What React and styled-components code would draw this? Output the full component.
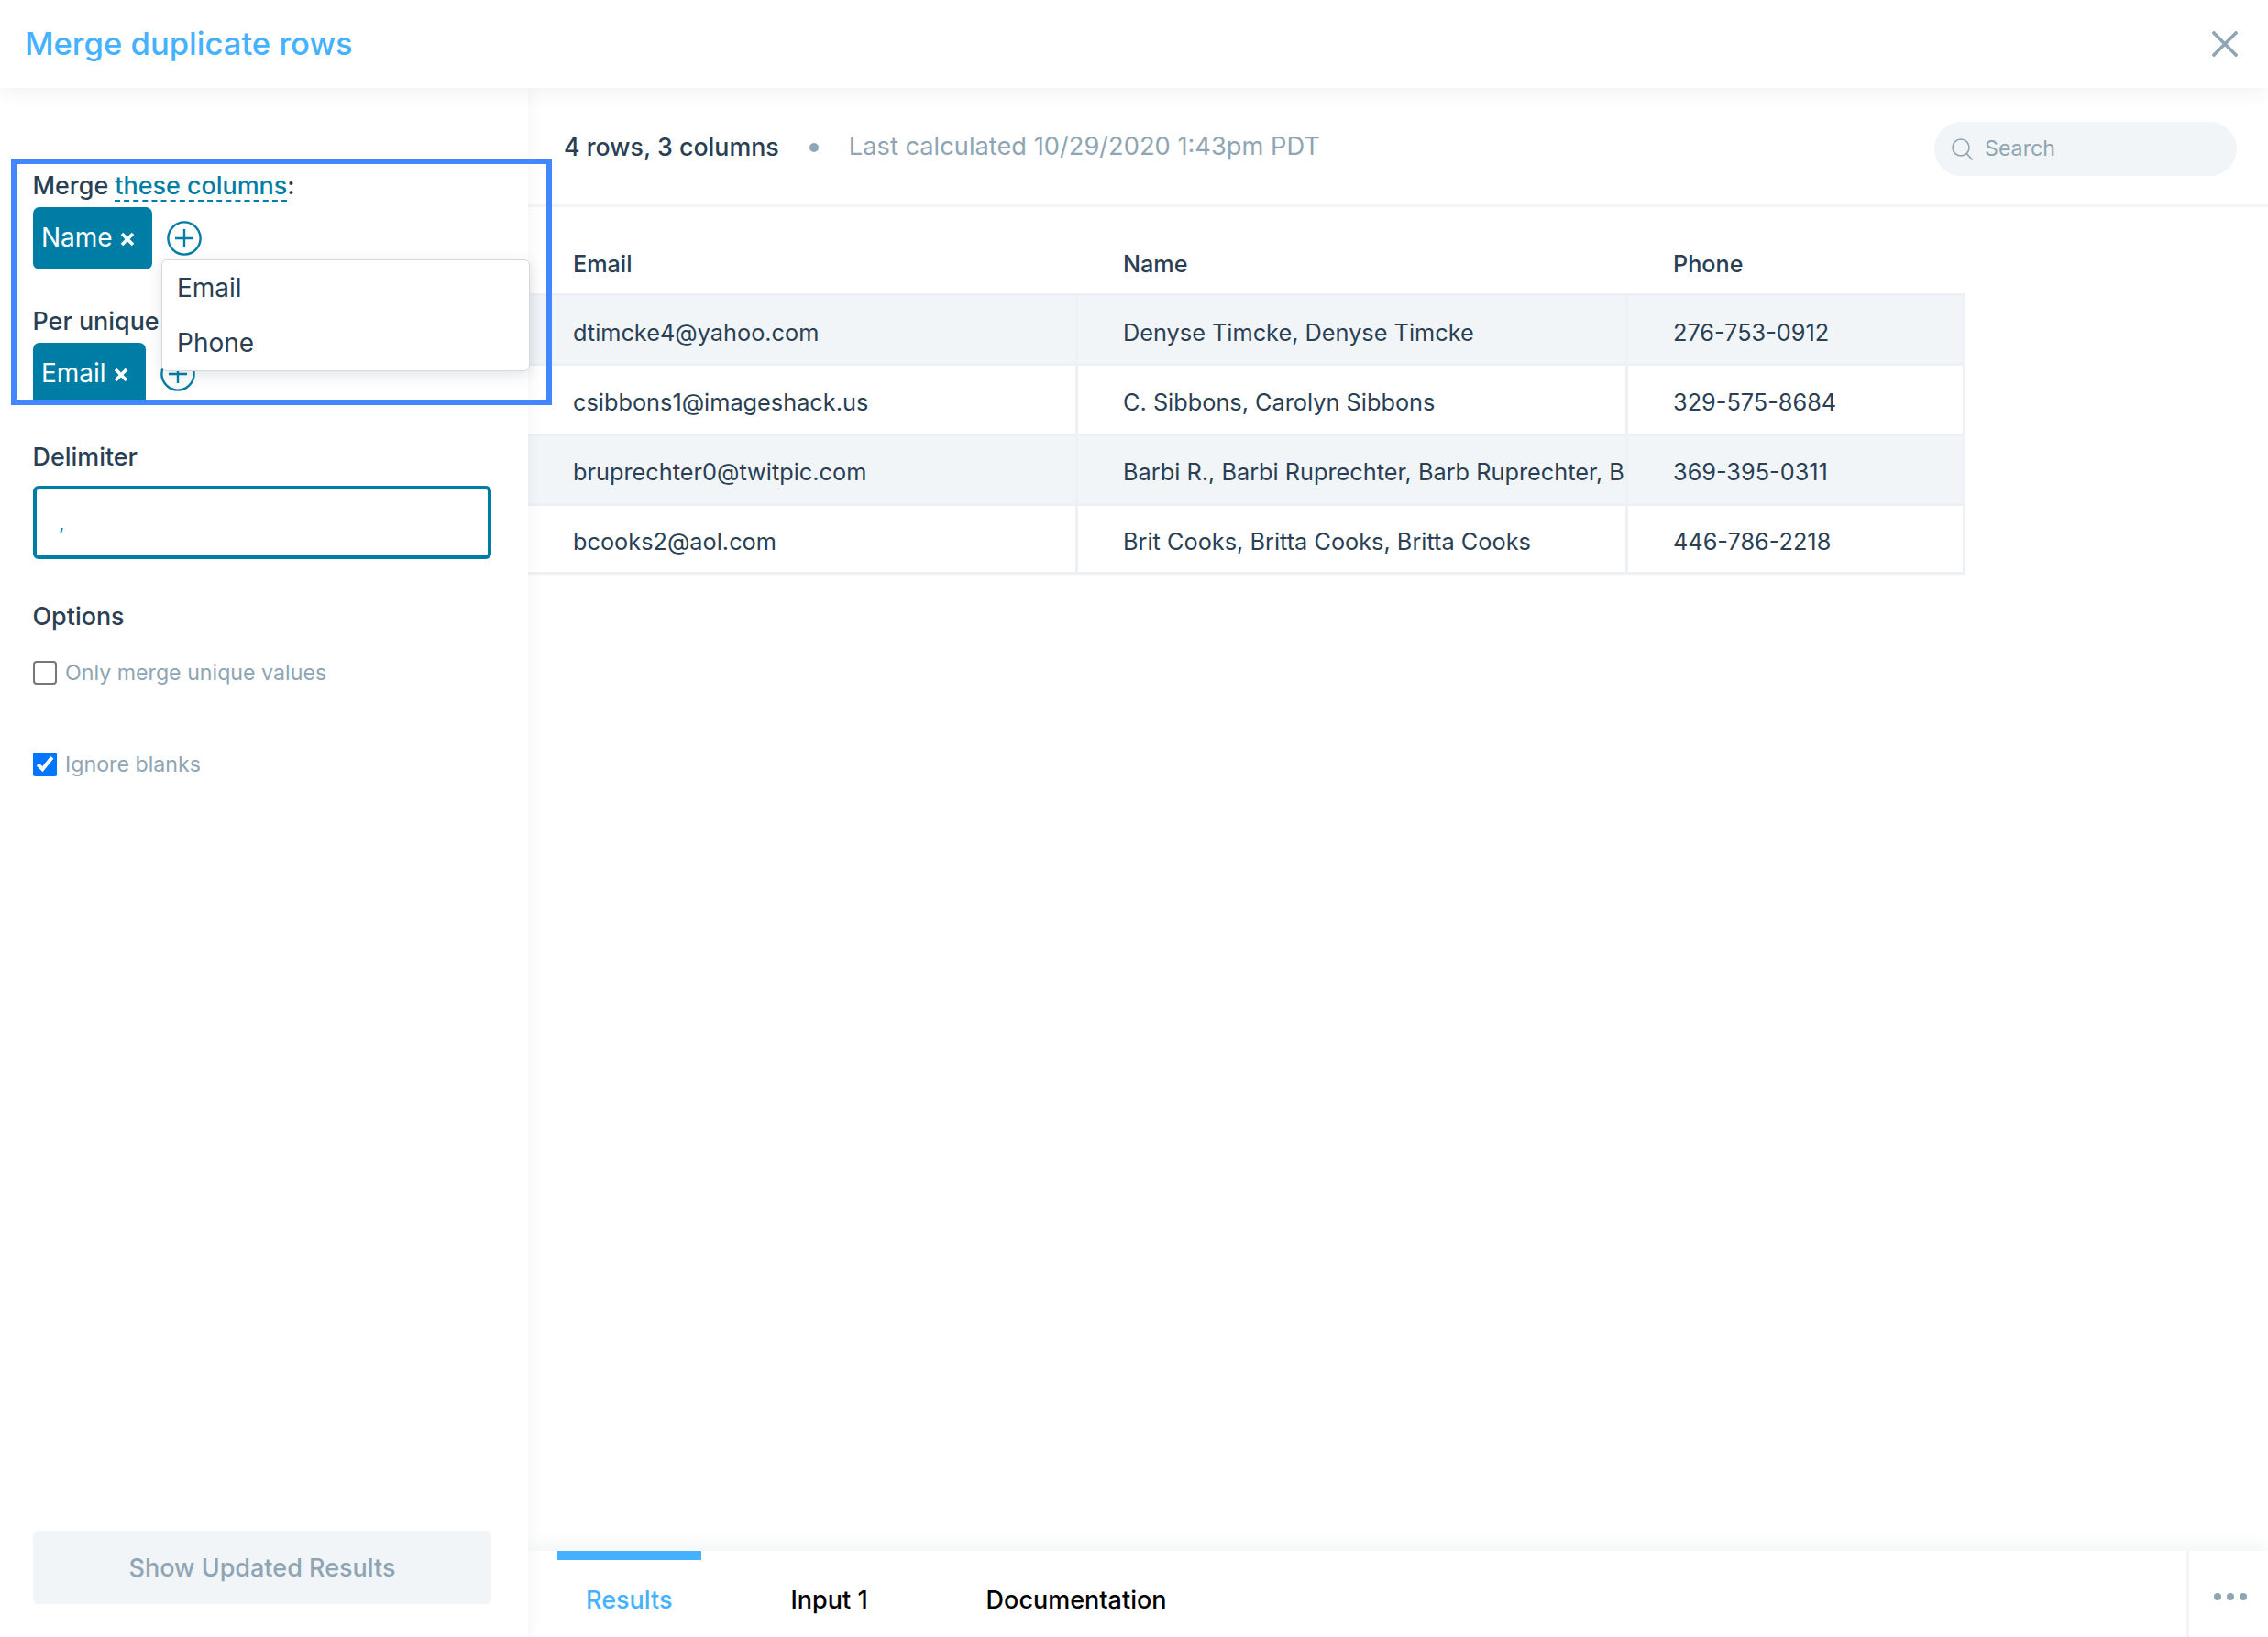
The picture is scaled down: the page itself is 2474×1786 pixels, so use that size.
import React from "react";
import styled, { createGlobalStyle } from "styled-components";

const Global = createGlobalStyle`
  html, body { margin: 0; padding: 0; background: #fff; }
  body { font-family: Inter, "Noto Sans", sans-serif; color: #2a3f54; }
  * { box-sizing: border-box; }
`;

const Page = styled.div`
  width: 2474px;
  height: 1786px;
  display: flex;
  flex-direction: column;
  overflow: hidden;
  background: #fff;
`;

const Header = styled.header`
  height: 96px;
  flex: none;
  display: flex;
  align-items: center;
  justify-content: space-between;
  padding: 0 33px 0 27px;
  background: #fff;
  box-shadow: 0 4px 20px rgba(40, 60, 80, 0.07);
  position: relative;
  z-index: 3;
`;

const Title = styled.h1`
  margin: 0 0 2px;
  font-size: 34.6px;
  line-height: 44px;
  font-weight: 500;
  color: #45b1ff;
`;

const CloseIcon = styled.svg`
  width: 28px;
  height: 28px;
  stroke: #8fa5b3;
  stroke-width: 3.6;
  stroke-linecap: square;
  display: block;
`;

const Body = styled.div`
  flex: 1;
  min-height: 0;
  display: flex;
`;

const Sidebar = styled.aside`
  width: 576px;
  flex: none;
  display: flex;
  flex-direction: column;
  padding: 86px 40px 36px 36px;
  background: #fff;
  box-shadow: 2px 0 14px rgba(40, 60, 80, 0.05);
  position: relative;
  z-index: 2;
`;

const Highlight = styled.div`
  position: absolute;
  left: 12px;
  top: 77px;
  width: 590px;
  height: 269px;
  border: 6px solid #4287ff;
  pointer-events: none;
  z-index: 4;
`;

const ColumnsForm = styled.div`
  height: 260px;
  margin-right: -60px;
  overflow: hidden;
`;

const FieldLabel = styled.div`
  font-size: 26.9px;
  line-height: 40px;
  padding: 0 0 2px;
  font-weight: 500;
  color: #2a3f54;
  margin-top: ${(p) => p.$top || 0}px;
  margin-left: -0.5px;
  white-space: nowrap;
`;

const DashedLink = styled.span`
  color: #007da5;
  border-bottom: 2px dashed #007da5;
`;

const TagRow = styled.div`
  display: flex;
  align-items: center;
  gap: 16px;
  margin-top: 2px;
  position: relative;
`;

const Tag = styled.div`
  height: 68px;
  display: flex;
  align-items: center;
  gap: 8px;
  padding: 0 19px 3px 9px;
  background: #007da5;
  border-radius: 7px;
  color: #fff;
  font-size: 28px;
  line-height: 34px;
`;

const TagClose = styled.svg`
  width: 16px;
  height: 16px;
  stroke: #fff;
  stroke-width: 3.6;
  margin-top: 5px;
  flex: none;
`;

const AddIcon = styled.svg`
  width: 38px;
  height: 38px;
  fill: none;
  stroke: #007da5;
  stroke-width: 2.4;
  flex: none;
`;

const Menu = styled.div`
  position: absolute;
  left: 140px;
  top: 57px;
  width: 402px;
  height: 122px;
  z-index: 2;
  background: #fff;
  border: 1px solid #d6d9dc;
  border-radius: 6px;
  box-shadow: 0 4px 16px rgba(40, 60, 80, 0.14);
`;

const MenuItem = styled.div`
  height: 60px;
  display: flex;
  align-items: center;
  padding-left: 16px;
  font-size: 28px;
  color: #2a3f54;
`;

const DelimiterInput = styled.input`
  width: 500px;
  height: 80px;
  margin-top: 10px;
  flex: none;
  display: block;
  border: 4px solid #007da5;
  border-radius: 6px;
  padding: 0 0 0 24px;
  outline: none;
  font-family: inherit;
  font-size: 22px;
  color: #007da5;
  background: #fff;
`;

const OptionRow = styled.label`
  display: flex;
  align-items: center;
  gap: 9px;
  height: 26px;
  margin-top: ${(p) => p.$top}px;
  font-size: 23.2px;
  color: #8fa5b3;
`;

const Check = styled.input`
  width: 26px;
  height: 26px;
  margin: 0;
  flex: none;
  &:not(:checked) {
    appearance: none;
    background: #fff;
    border: 2px solid #767676;
    border-radius: 4px;
  }
`;

const ApplyButton = styled.button`
  margin-top: auto;
  width: 500px;
  height: 80px;
  flex: none;
  border: 0;
  border-radius: 6px;
  background: #f1f5f8;
  color: #8fa5b3;
  font-family: inherit;
  font-size: 27px;
  font-weight: 500;
`;

const Main = styled.main`
  flex: 1;
  min-width: 0;
  display: flex;
  flex-direction: column;
  background: #fff;
`;

const TopBar = styled.div`
  height: 130px;
  flex: none;
  display: flex;
  align-items: flex-start;
  padding: 35px 34px 0 39px;
  border-bottom: 3px solid #f1f5f8;
`;

const Stats = styled.div`
  font-size: 26.8px;
  line-height: 58px;
  font-weight: 500;
  color: #2a3f54;
`;

const Dot = styled.span`
  width: 10px;
  height: 10px;
  margin: 25px 33px 0 33px;
  border-radius: 50%;
  background: #8fa5b3;
  flex: none;
`;

const Calculated = styled.div`
  flex: 1;
  font-size: 27.25px;
  line-height: 58px;
  color: #8fa5b3;
`;

const SearchBox = styled.div`
  width: 330px;
  height: 59px;
  margin-top: 2px;
  display: flex;
  align-items: center;
  gap: 13px;
  padding-left: 19px;
  border-radius: 30px;
  background: #f1f5f8;
`;

const SearchIcon = styled.svg`
  width: 23px;
  height: 24px;
  fill: none;
  stroke: #8fa5b3;
  stroke-width: 1.6;
  flex: none;
`;

const SearchInput = styled.input`
  flex: 1;
  min-width: 0;
  border: 0;
  padding: 0 0 2px;
  outline: none;
  background: transparent;
  font-family: inherit;
  font-size: 23.2px;
  color: #8fa5b3;
  &::placeholder { color: #8fa5b3; opacity: 1; }
`;

const Table = styled.div`
  width: 1568px;
  display: grid;
  grid-template-columns: 600px 600px 368px;
`;

const HeadCell = styled.div`
  height: 94px;
  padding: 42px 0 12px 49px;
  font-size: 25.2px;
  line-height: 40px;
  font-weight: 500;
  color: #2a3f54;
`;

const Cell = styled.div`
  height: 76.25px;
  display: flex;
  align-items: center;
  padding: 5px 0 0 49px;
  font-size: 25.3px;
  white-space: nowrap;
  overflow: hidden;
  color: #2a3f54;
  background: ${(p) => (p.$shaded ? "#f1f5f8" : "#fff")};
  border-top: 3px solid #edf1f5;
  border-right: 3px solid #edf1f5;
  ${(p) => p.$last && "border-bottom: 3px solid #edf1f5; height: 78px;"}
`;

const Spacer = styled.div`
  flex: 1;
`;

const TabBar = styled.div`
  height: 94px;
  flex: none;
  display: flex;
  padding-left: 32px;
  gap: 66px;
  background: #fff;
  box-shadow: 0 -6px 18px rgba(40, 60, 80, 0.06);
  position: relative;
`;

const Tab = styled.div`
  height: 94px;
  padding: 23px 32px 0 31px;
  border-top: 10px solid ${(p) => (p.$active ? "#45b1ff" : "transparent")};
  font-size: 27px;
  line-height: 42px;
  font-weight: 500;
  color: ${(p) => (p.$active ? "#45b1ff" : "#000")};
`;

const MoreButton = styled.div`
  margin-left: auto;
  width: 89px;
  display: flex;
  align-items: center;
  justify-content: center;
  gap: 6px;
  padding: 6px 0 0 4px;
  border-left: 3px solid #f1f5f8;
`;

const MoreDot = styled.span`
  width: 8px;
  height: 8px;
  border-radius: 50%;
  background: #8fa5b3;
`;

const rows = [
  ["dtimcke4@yahoo.com", "Denyse Timcke, Denyse Timcke", "276-753-0912"],
  ["csibbons1@imageshack.us", "C. Sibbons, Carolyn Sibbons", "329-575-8684"],
  ["bruprechter0@twitpic.com", "Barbi R., Barbi Ruprechter, Barb Ruprechter, B", "369-395-0311"],
  ["bcooks2@aol.com", "Brit Cooks, Britta Cooks, Britta Cooks", "446-786-2218"],
];

const X = () => (
  <TagClose viewBox="0 0 16 16">
    <path d="M2 2 L14 14 M14 2 L2 14" />
  </TagClose>
);

const Add = () => (
  <AddIcon viewBox="0 0 38 38">
    <circle cx="19" cy="19" r="17.6" />
    <path d="M19 9 V29 M9 19 H29" />
  </AddIcon>
);

export default function App() {
  return (
    <Page>
      <Global />
      <Header>
        <Title>Merge duplicate rows</Title>
        <CloseIcon viewBox="0 0 28 28">
          <path d="M2 2 L26 26 M26 2 L2 26" />
        </CloseIcon>
      </Header>
      <Body>
        <Sidebar>
          <ColumnsForm>
            <FieldLabel>
              Merge <DashedLink>these columns</DashedLink>:
            </FieldLabel>
            <TagRow>
              <Tag>
                Name
                <X />
              </Tag>
              <Add />
              <Menu>
                <MenuItem>Email</MenuItem>
                <MenuItem>Phone</MenuItem>
              </Menu>
            </TagRow>
            <FieldLabel $top={36}>Per unique</FieldLabel>
            <TagRow>
              <Tag>
                Email
                <X />
              </Tag>
              <Add />
            </TagRow>
          </ColumnsForm>
          <Highlight />
          <FieldLabel $top={36}>Delimiter</FieldLabel>
          <DelimiterInput defaultValue="," />
          <FieldLabel $top={42}>Options</FieldLabel>
          <OptionRow $top={27}>
            <Check type="checkbox" />
            Only merge unique values
          </OptionRow>
          <OptionRow $top={74}>
            <Check type="checkbox" defaultChecked />
            Ignore blanks
          </OptionRow>
          <ApplyButton>Show Updated Results</ApplyButton>
        </Sidebar>
        <Main>
          <TopBar>
            <Stats>4 rows, 3 columns</Stats>
            <Dot />
            <Calculated>Last calculated 10/29/2020 1:43pm PDT</Calculated>
            <SearchBox>
              <SearchIcon viewBox="0 0 23 24">
                <circle cx="10" cy="10" r="9" />
                <path d="M16.5 16.8 L22.5 23.5" />
              </SearchIcon>
              <SearchInput placeholder="Search" />
            </SearchBox>
          </TopBar>
          <Table>
            <HeadCell>Email</HeadCell>
            <HeadCell>Name</HeadCell>
            <HeadCell>Phone</HeadCell>
            {rows.map((row, i) =>
              row.map((value) => (
                <Cell key={value} $shaded={i % 2 === 0} $last={i === rows.length - 1}>
                  {value}
                </Cell>
              ))
            )}
          </Table>
          <Spacer />
          <TabBar>
            <Tab $active>Results</Tab>
            <Tab>Input 1</Tab>
            <Tab>Documentation</Tab>
            <MoreButton>
              <MoreDot />
              <MoreDot />
              <MoreDot />
            </MoreButton>
          </TabBar>
        </Main>
      </Body>
    </Page>
  );
}
